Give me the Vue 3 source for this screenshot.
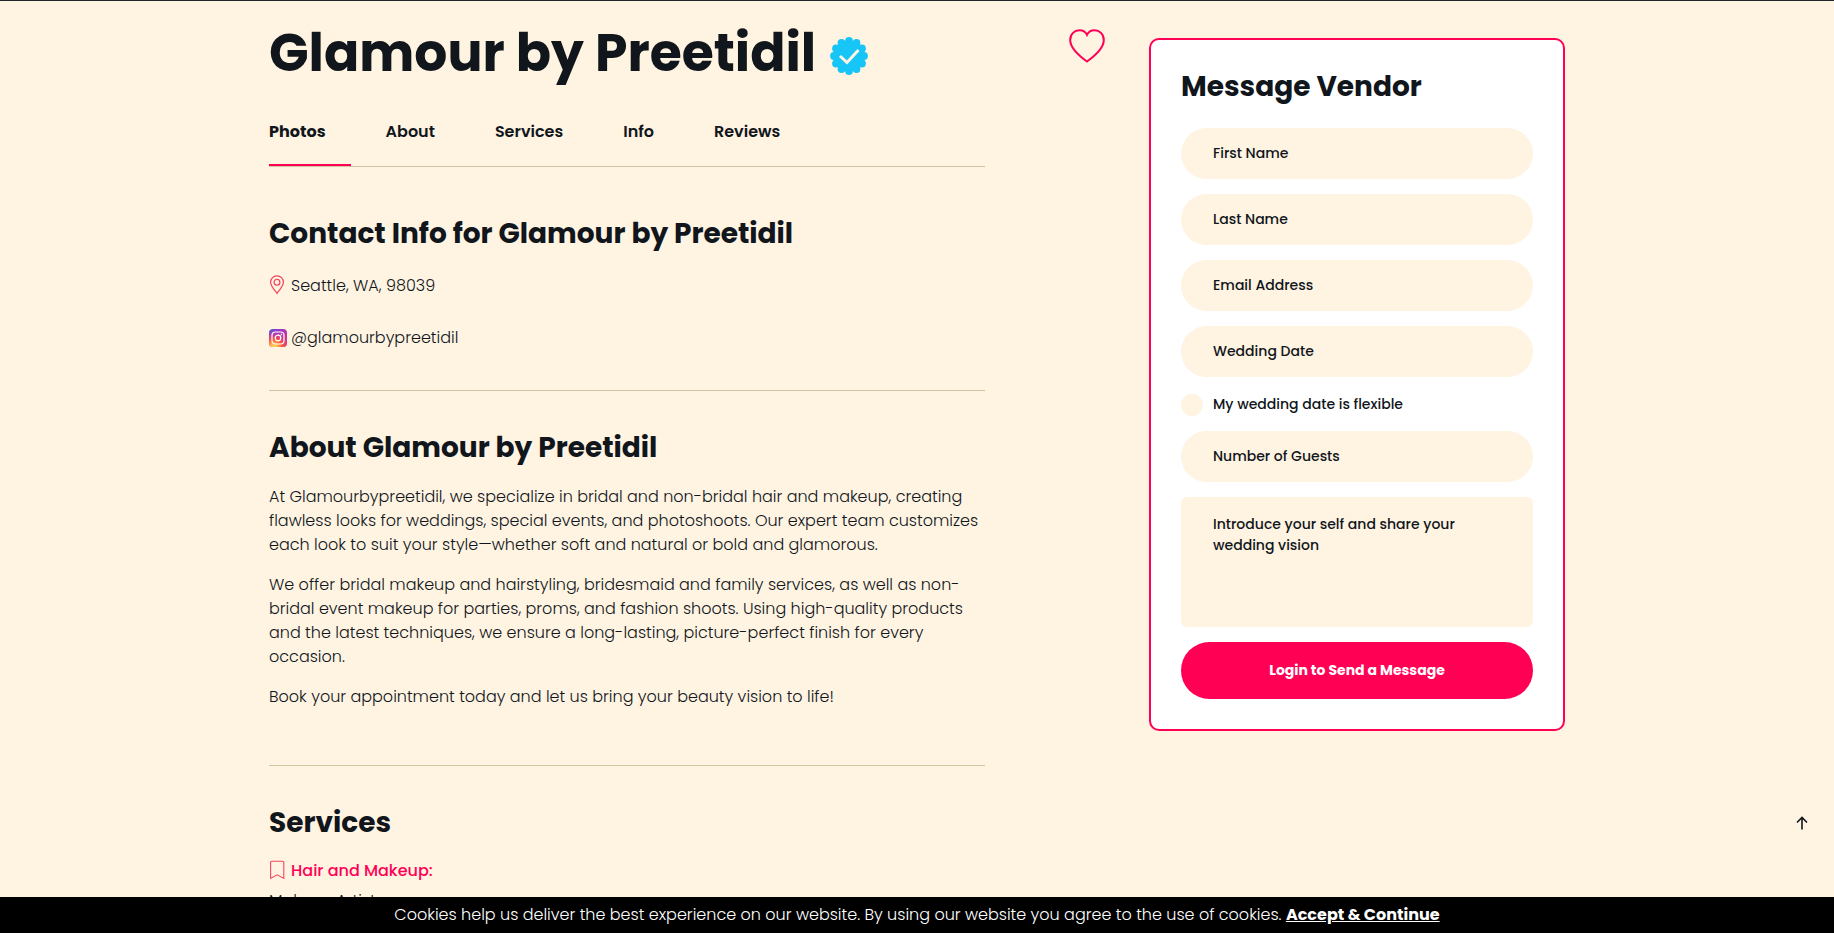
<template>
	<div class="page">
		<div class="container">
			<main class="vendor">
				<header class="vendor-header">
					<h1>
						Glamour by Preetidil
						<svg class="badge" viewBox="0 0 38 38" role="img" aria-label="Verified">
							<g fill="#18c5f7">
								<circle cx="19" cy="19" r="15.5" />
								<circle v-for="(lobe, i) in lobes" :key="i" :cx="lobe.x" :cy="lobe.y" r="3.9" />
							</g>
							<path d="M10 19l7 6.500L28.500 13" fill="none" stroke="#fff3e2" stroke-width="3" />
						</svg>
					</h1>
					<button class="favorite" type="button" aria-label="Save vendor">
						<svg viewBox="0 0 36 34" width="36" height="34" fill="none" stroke="#ff0055" stroke-width="2">
							<path d="M18 32.5C11 27.5 1.2 20 1.2 11C1.2 5.200 5.500 1.200 10.400 1.200C13.800 1.200 16.700 2.900 18 5.800C19.300 2.900 22.200 1.200 25.600 1.200C30.500 1.200 34.800 5.200 34.800 11C34.800 20 25 27.500 18 32.500Z" />
						</svg>
					</button>
				</header>

				<div class="vendor-body">
					<nav class="tabs">
						<a v-for="tab in tabs" :key="tab" :href="'#' + tab.toLowerCase()" :class="{ active: tab === activeTab }" @click="activeTab = tab">{{ tab }}</a>
					</nav>

					<section id="info" class="contact">
						<h2>Contact Info for Glamour by Preetidil</h2>
						<p class="icon-line">
							<svg viewBox="0 0 18 22" width="18" height="22" fill="none" stroke="#f5455c" stroke-width="1.2">
								<path d="M8 18.400C6 15.500 1.600 11 1.600 7.200a6.400 6.400 0 0 1 12.800 0C14.400 11 10 15.500 8 18.400Z" />
								<circle cx="8" cy="7.200" r="2.900" />
							</svg>
							Seattle, WA, 98039
						</p>
						<p class="icon-line">
							<svg viewBox="0 0 18 18" width="18" height="18">
								<defs>
									<linearGradient id="insta-base" x1="0" y1="0" x2="1" y2="1">
										<stop offset="0" stop-color="#4f5bd5" />
										<stop offset="0.350" stop-color="#a033c8" />
										<stop offset="1" stop-color="#e8326e" />
									</linearGradient>
									<radialGradient id="insta-glow" cx="0.270" cy="1.070" r="1">
										<stop offset="0" stop-color="#ffdd55" />
										<stop offset="0.200" stop-color="#ffc04d" />
										<stop offset="0.500" stop-color="#ff543e" />
										<stop offset="1" stop-color="#c837ab" stop-opacity="0" />
									</radialGradient>
								</defs>
								<rect width="18" height="18" rx="4" fill="url(#insta-base)" />
								<rect width="18" height="18" rx="4" fill="url(#insta-glow)" />
								<rect x="3" y="3" width="12" height="12" rx="3.500" fill="none" stroke="#fff" stroke-width="1.200" />
								<circle cx="9" cy="9" r="2.800" fill="none" stroke="#fff" stroke-width="1.200" />
								<circle cx="12.400" cy="5.600" r="0.800" fill="#fff" />
							</svg>
							<a href="#instagram">@glamourbypreetidil</a>
						</p>
					</section>

					<section id="about" class="about">
						<h2>About Glamour by Preetidil</h2>
						<p>
							At Glamourbypreetidil, we specialize in bridal and non-bridal hair and makeup, creating
							flawless looks for weddings, special events, and photoshoots. Our expert team customizes
							each look to suit your style—whether soft and natural or bold and glamorous.
						</p>
						<p>
							We offer bridal makeup and hairstyling, bridesmaid and family services, as well as non-bridal
							event makeup for parties, proms, and fashion shoots. Using high-quality products
							and the latest techniques, we ensure a long-lasting, picture-perfect finish for every
							occasion.
						</p>
						<p>Book your appointment today and let us bring your beauty vision to life!</p>
					</section>

					<section id="services" class="services">
						<h2>Services</h2>
						<h3 class="icon-line">
							<svg viewBox="0 0 18 22" width="18" height="22" fill="none" stroke="#f5455c" stroke-width="1.100">
								<path d="M1.600 18.400V2.400a1.200 1.200 0 0 1 1.200-1.200h10.800a1.200 1.200 0 0 1 1.200 1.200v16L8.200 14.800Z" />
							</svg>
							Hair and Makeup:
						</h3>
						<p>Makeup Artist</p>
					</section>
				</div>
			</main>

			<aside class="message-card">
				<h2>Message Vendor</h2>
				<form @submit.prevent>
					<input v-model="form.firstName" type="text" placeholder="First Name" aria-label="First Name" />
					<input v-model="form.lastName" type="text" placeholder="Last Name" aria-label="Last Name" />
					<input v-model="form.email" type="email" placeholder="Email Address" aria-label="Email Address" />
					<input v-model="form.date" type="text" placeholder="Wedding Date" aria-label="Wedding Date" />
					<label class="flexible">
						<input v-model="form.flexible" type="checkbox" />
						My wedding date is flexible
					</label>
					<input v-model="form.guests" type="text" placeholder="Number of Guests" aria-label="Number of Guests" />
					<textarea v-model="form.message" placeholder="Introduce your self and share your wedding vision" aria-label="Message"></textarea>
					<button type="submit">Login to Send a Message</button>
				</form>
			</aside>
		</div>

		<button class="back-to-top" type="button" aria-label="Back to top" @click="scrollToTop">
			<svg viewBox="0 0 12 14" width="12" height="14" fill="none" stroke="#10161b" stroke-width="1.600">
				<path d="M6 13.500V1.800M1 6.500L6 1.500l5 5" />
			</svg>
		</button>

		<div v-if="showCookies" class="cookies">
			Cookies help us deliver the best experience on our website. By using our website you agree to the use of cookies.
			<a href="#accept" @click.prevent="showCookies = false">Accept &amp; Continue</a>
		</div>
	</div>
</template>

<script setup>
import { reactive, ref } from "vue";

const tabs = ["Photos", "About", "Services", "Info", "Reviews"];
const activeTab = ref("Photos");
const showCookies = ref(true);

const form = reactive({
	firstName: "",
	lastName: "",
	email: "",
	date: "",
	flexible: false,
	guests: "",
	message: "",
});

// scalloped edge of the verified badge
const lobes = Array.from({ length: 12 }, (_, i) => {
	const angle = (i * Math.PI) / 6;
	return { x: 19 + 15 * Math.sin(angle), y: 19 - 15 * Math.cos(angle) };
});

const scrollToTop = () => {
	window.scrollTo({ top: 0, behavior: "smooth" });
};
</script>

<style>
body {
	margin: 0;
	background-color: #fff3e2;
}
</style>

<style scoped>
.page {
	border-top: 1px solid #212529;
	color: #10161b;
	font-family: Poppins, Inter, sans-serif;
	font-size: 16px;
	font-weight: 300;
	line-height: 24px;
}

.container {
	display: flex;
	align-items: flex-start;
	gap: 44px;
	max-width: 1296px;
	margin: 0 auto;
	padding: 0 12px;
}

.vendor {
	flex: 1;
	min-width: 0;
}

.vendor-header {
	display: flex;
	justify-content: space-between;
	align-items: flex-start;
	padding-top: 20px;
}

h1 {
	display: flex;
	align-items: center;
	gap: 14px;
	margin: 0;
	font-size: 52px;
	font-weight: 700;
	line-height: 64px;
}

.badge {
	width: 38px;
	height: 38px;
	margin-top: 6px;
}

.favorite {
	margin-top: 8px;
	padding: 0;
	border: none;
	background: none;
	cursor: pointer;
}

.favorite svg,
.back-to-top svg {
	display: block;
}

.vendor-body {
	max-width: 716px;
}

.tabs {
	display: flex;
	gap: 35px;
	margin-top: 32px;
	border-bottom: 1px solid #d2c4a0;
}

.tabs a {
	padding: 3px 25px 20px 0;
	border-bottom: 2px solid transparent;
	color: #10161b;
	font-weight: 600;
	text-decoration: none;
}

.tabs a.active {
	border-bottom-color: #ff0055;
	font-weight: 700;
}

h2 {
	margin: 0;
	font-size: 28px;
	font-weight: 700;
	line-height: 34px;
}

p {
	margin: 0;
}

.icon-line {
	display: flex;
	align-items: center;
	gap: 4px;
}

.contact {
	padding: 50px 0 40px;
	border-bottom: 1px solid #d2c4a0;
}

.contact p {
	margin-top: 28px;
}

.contact h2 + p {
	margin-top: 23px;
}

.contact a {
	color: inherit;
	text-decoration: none;
}

.about {
	padding: 40px 0 56px;
	border-bottom: 1px solid #d2c4a0;
}

.about p {
	margin-top: 16px;
}

.about h2 + p {
	margin-top: 20px;
}

.services {
	padding-top: 40px;
}

.services h3 {
	margin: 19px 0 6px;
	color: #ff0055;
	font-size: 16px;
	font-weight: 500;
}

.message-card {
	box-sizing: border-box;
	flex: 0 0 416px;
	margin-top: 37px;
	padding: 30px;
	border: 2px solid #ff0055;
	border-radius: 10px;
	background-color: #fff;
}

.message-card form {
	display: flex;
	flex-direction: column;
	gap: 15px;
	margin-top: 24px;
}

.message-card input,
.message-card textarea,
.message-card button {
	box-sizing: border-box;
	margin: 0;
	border: none;
	font-family: inherit;
	font-size: 14px;
	font-weight: 500;
	line-height: 21px;
}

.message-card input,
.message-card textarea {
	padding: 17px 32px;
	background-color: #fff3e2;
	color: #10161b;
}

.message-card input {
	height: 51px;
	padding-block: 15px;
	border-radius: 26px;
}

.message-card textarea {
	height: 130px;
	border-radius: 6px;
	resize: none;
}

.message-card ::placeholder {
	color: #10161b;
	opacity: 1;
}

.flexible {
	display: flex;
	align-items: flex-end;
	gap: 10px;
	font-size: 14px;
	font-weight: 500;
}

.message-card .flexible input {
	appearance: none;
	width: 22px;
	height: 22px;
	padding: 0;
	border-radius: 50%;
}

.message-card .flexible input:checked {
	background-color: #ff0055;
}

.message-card button {
	height: 57px;
	border-radius: 29px;
	background-color: #ff0055;
	color: #fff;
	font-weight: 700;
	cursor: pointer;
}

.back-to-top {
	position: fixed;
	right: 16px;
	bottom: 93px;
	padding: 10px;
	border: none;
	background: none;
	cursor: pointer;
}

.cookies {
	position: fixed;
	right: 0;
	bottom: 0;
	left: 0;
	padding: 6px 12px;
	background-color: #000;
	color: #fff;
	text-align: center;
}

.cookies a {
	color: #fff;
	font-weight: 700;
}
</style>
